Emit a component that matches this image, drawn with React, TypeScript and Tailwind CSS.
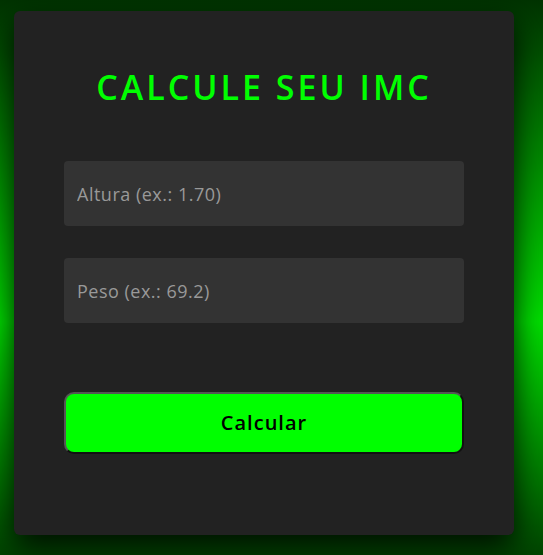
import React from "react";

export default function App() {
  return (
    <div
      className="w-[543px] h-[555px] overflow-hidden bg-[linear-gradient(to_bottom,#003300_0%,#00dd00_58%,#004400_100%)] pt-[11px] pl-[14px]"
      style={{ fontFamily: "'Open Sans', 'Noto Sans', sans-serif" }}
    >
      <div className="w-[500px] h-[524px] rounded-[6px] bg-[#222222] shadow-[0_12px_30px_rgba(0,0,0,0.85)] px-[50px] pt-[56px] flex flex-col">
        <h1 className="text-center text-[34px] leading-[40px] font-semibold tracking-[3px] text-[#00ff00]">CALCULE SEU IMC</h1>
        <input
          type="text"
          placeholder="Altura (ex.: 1.70)"
          className="mt-[54px] h-[65px] w-[400px] rounded-[4px] bg-[#333333] px-[13px] text-[18px] tracking-[0.5px] text-white placeholder:text-[#999999] outline-none"
        />
        <input
          type="text"
          placeholder="Peso (ex.: 69.2)"
          className="mt-[32px] h-[65px] w-[400px] rounded-[4px] bg-[#333333] px-[13px] text-[18px] tracking-[0.5px] text-white placeholder:text-[#999999] outline-none"
        />
        <button className="mt-[69px] h-[62px] w-[400px] rounded-[10px] border-2 border-t-[#555555] border-l-[#555555] border-r-[#111111] border-b-[#111111] bg-[#00ff00] text-[20px] font-semibold tracking-[1px] text-black">
          Calcular
        </button>
      </div>
    </div>
  );
}
